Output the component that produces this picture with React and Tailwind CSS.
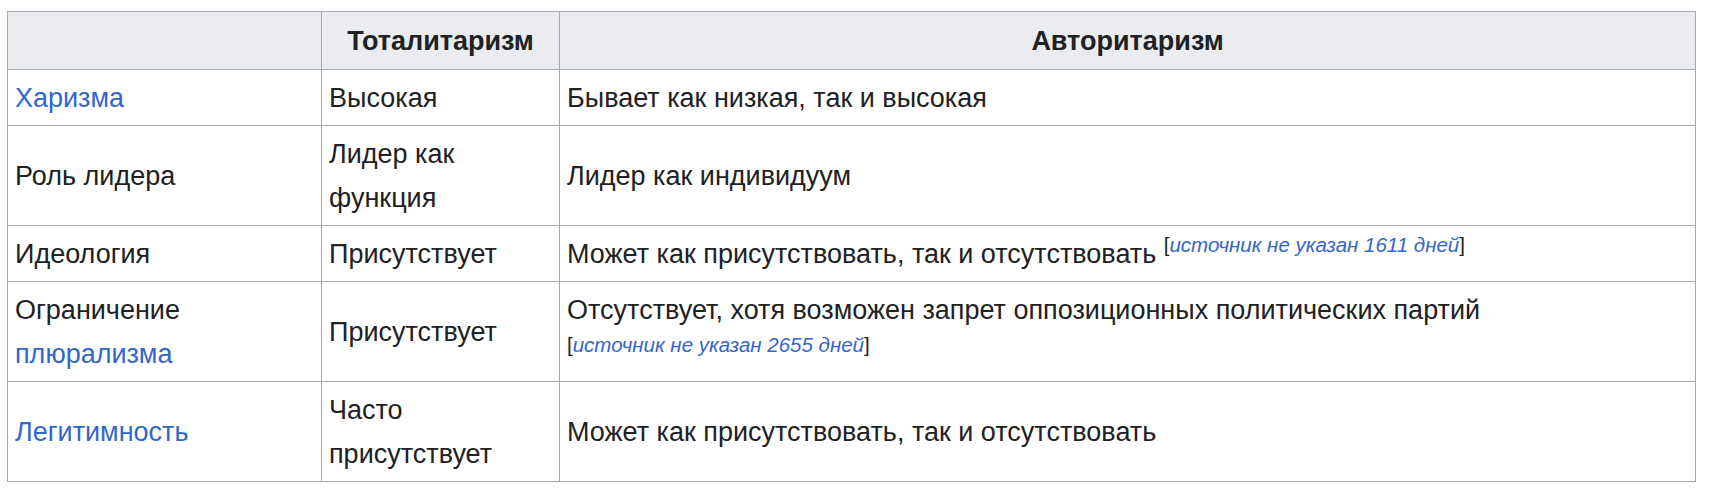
const rows = [
  { name: 'Харизма', link: true, total: 'Высокая', auth: 'Бывает как низкая, так и высокая' },
  { name: 'Роль лидера', total: 'Лидер как функция', auth: 'Лидер как индивидуум' },
  {
    name: 'Идеология',
    total: 'Присутствует',
    auth: 'Может как присутствовать, так и отсутствовать',
    note: 'источник не указан 1611 дней',
  },
  {
    name: (
      <>
        Ограничение <a className="text-[#3366cc]">плюрализма</a>
      </>
    ),
    total: 'Присутствует',
    auth: 'Отсутствует, хотя возможен запрет оппозиционных политических партий',
    note: 'источник не указан 2655 дней',
  },
  { name: 'Легитимность', link: true, total: 'Часто присутствует', auth: 'Может как присутствовать, так и отсутствовать' },
];

function Note({ text }) {
  return (
    <sup className="whitespace-nowrap text-[20.5px]">
      [<i className="text-[#3366cc]">{text}</i>]
    </sup>
  );
}

export default function App() {
  return (
    <div className="min-h-screen bg-white pl-[7px] pt-[11px] font-['Liberation_Sans',Arial,sans-serif] text-[27px] leading-[44px] text-[#202122]">
      <table className="w-[1689px] table-fixed border-collapse border border-[#a2a9b1]">
        <colgroup>
          <col className="w-[314px]" />
          <col className="w-[238px]" />
          <col />
        </colgroup>
        <thead>
          <tr className="bg-[#eaecf0]">
            <th className="border border-[#a2a9b1] px-[7px] py-[6.5px]"></th>
            <th className="border border-[#a2a9b1] px-[7px] py-[6.5px] text-center font-bold">Тоталитаризм</th>
            <th className="border border-[#a2a9b1] px-[7px] py-[6.5px] text-center font-bold">Авторитаризм</th>
          </tr>
        </thead>
        <tbody>
          {rows.map((r, i) => (
            <tr key={i}>
              <td className="border border-[#a2a9b1] px-[7px] py-[5.5px] align-middle">
                {r.link ? <a className="text-[#3366cc]">{r.name}</a> : r.name}
              </td>
              <td className="border border-[#a2a9b1] px-[7px] py-[5.5px] align-middle">{r.total}</td>
              <td className="border border-[#a2a9b1] px-[7px] py-[5.5px] align-middle">
                {r.auth}
                {r.note && (
                  <>
                    {' '}
                    <Note text={r.note} />
                  </>
                )}
              </td>
            </tr>
          ))}
        </tbody>
      </table>
    </div>
  );
}
